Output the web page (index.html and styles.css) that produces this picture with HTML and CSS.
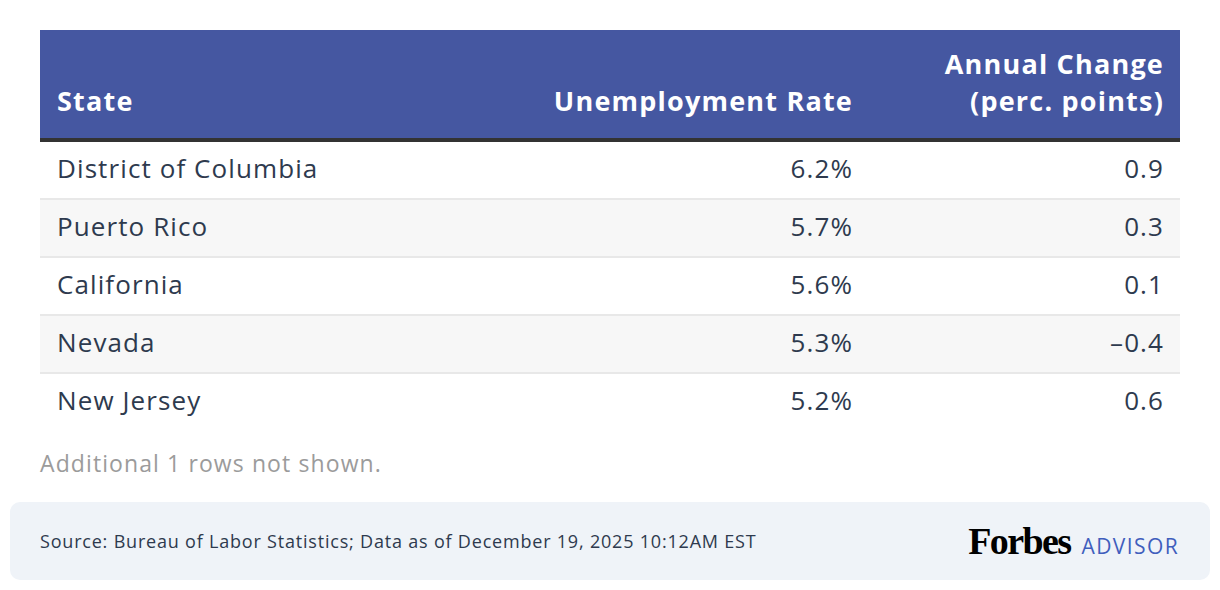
FILE: index.html
```html
<!DOCTYPE html>
<html>
<head>
<meta charset="utf-8">
<link rel="stylesheet" href="styles.css">
</head>
<body>
<div class="page">
  <div class="content">
    <table class="data">
      <thead>
        <tr>
          <th class="col-state">State</th>
          <th class="num">Unemployment Rate</th>
          <th class="num col-change">Annual Change<br>(perc. points)</th>
        </tr>
      </thead>
      <tbody>
        <tr><td>District of Columbia</td><td class="num">6.2%</td><td class="num">0.9</td></tr>
        <tr><td>Puerto Rico</td><td class="num">5.7%</td><td class="num">0.3</td></tr>
        <tr><td>California</td><td class="num">5.6%</td><td class="num">0.1</td></tr>
        <tr><td>Nevada</td><td class="num">5.3%</td><td class="num">–0.4</td></tr>
        <tr><td>New Jersey</td><td class="num">5.2%</td><td class="num">0.6</td></tr>
      </tbody>
    </table>
    <p class="note">Additional 1 rows not shown.</p>
  </div>
  <div class="footer">
    <span class="source">Source: Bureau of Labor Statistics; Data as of December 19, 2025 10:12AM EST</span>
    <span class="logo"><span class="forbes">Forbes</span><span class="advisor">ADVISOR</span></span>
  </div>
</div>
</body>
</html>
```
FILE: styles.css
```css
html, body {
  margin: 0;
  padding: 0;
  background: #ffffff;
}
body {
  font-family: "Open Sans", "Noto Sans", sans-serif;
  color: #2e3a4e;
}
.page {
  width: 1200px;
  margin: 0 10px;
}
.content {
  padding: 30px 30px 0 30px;
}
.data {
  width: 1140px;
  border-collapse: collapse;
  font-size: 26px;
  letter-spacing: 1.1px;
}
.data th {
  background: #4557a1;
  color: #ffffff;
  font-weight: 700;
  font-size: 27px;
  letter-spacing: 1.2px;
  text-align: left;
  vertical-align: bottom;
  line-height: 37px;
  padding: 15px 16px 19px 17px;
  border-bottom: 4px solid #333333;
}
.data th.num {
  text-align: right;
}
.data td {
  height: 52px;
  padding: 0 16px 4px 17px;
  line-height: 30px;
  border-bottom: 2px solid #e8e8e8;
}
.data tbody tr:last-child td {
  border-bottom: none;
}
.data tbody tr:nth-child(even) td {
  background: #f7f7f7;
}
.data td.num {
  text-align: right;
}
.col-change {
  width: 278px;
}
.note {
  margin: 20px 0 0 0;
  font-size: 23px;
  letter-spacing: 1.1px;
  line-height: 26px;
  color: #9b9b9b;
}
.footer {
  margin-top: 26px;
  background: #eff3f8;
  border-radius: 10px;
  height: 78px;
  display: flex;
  align-items: center;
  justify-content: space-between;
  padding: 0 31px 0 30px;
  box-sizing: border-box;
}
.source {
  font-size: 18px;
  letter-spacing: 0.8px;
  color: #2e3a4e;
}
.logo {
  display: flex;
  align-items: baseline;
  gap: 11px;
}
.forbes {
  font-family: "Liberation Serif", serif;
  font-weight: 700;
  font-size: 38px;
  letter-spacing: -1.6px;
  color: #000000;
}
.advisor {
  font-family: "Open Sans", sans-serif;
  font-size: 21px;
  color: #3f5ebd;
  letter-spacing: 1.4px;
}
```
